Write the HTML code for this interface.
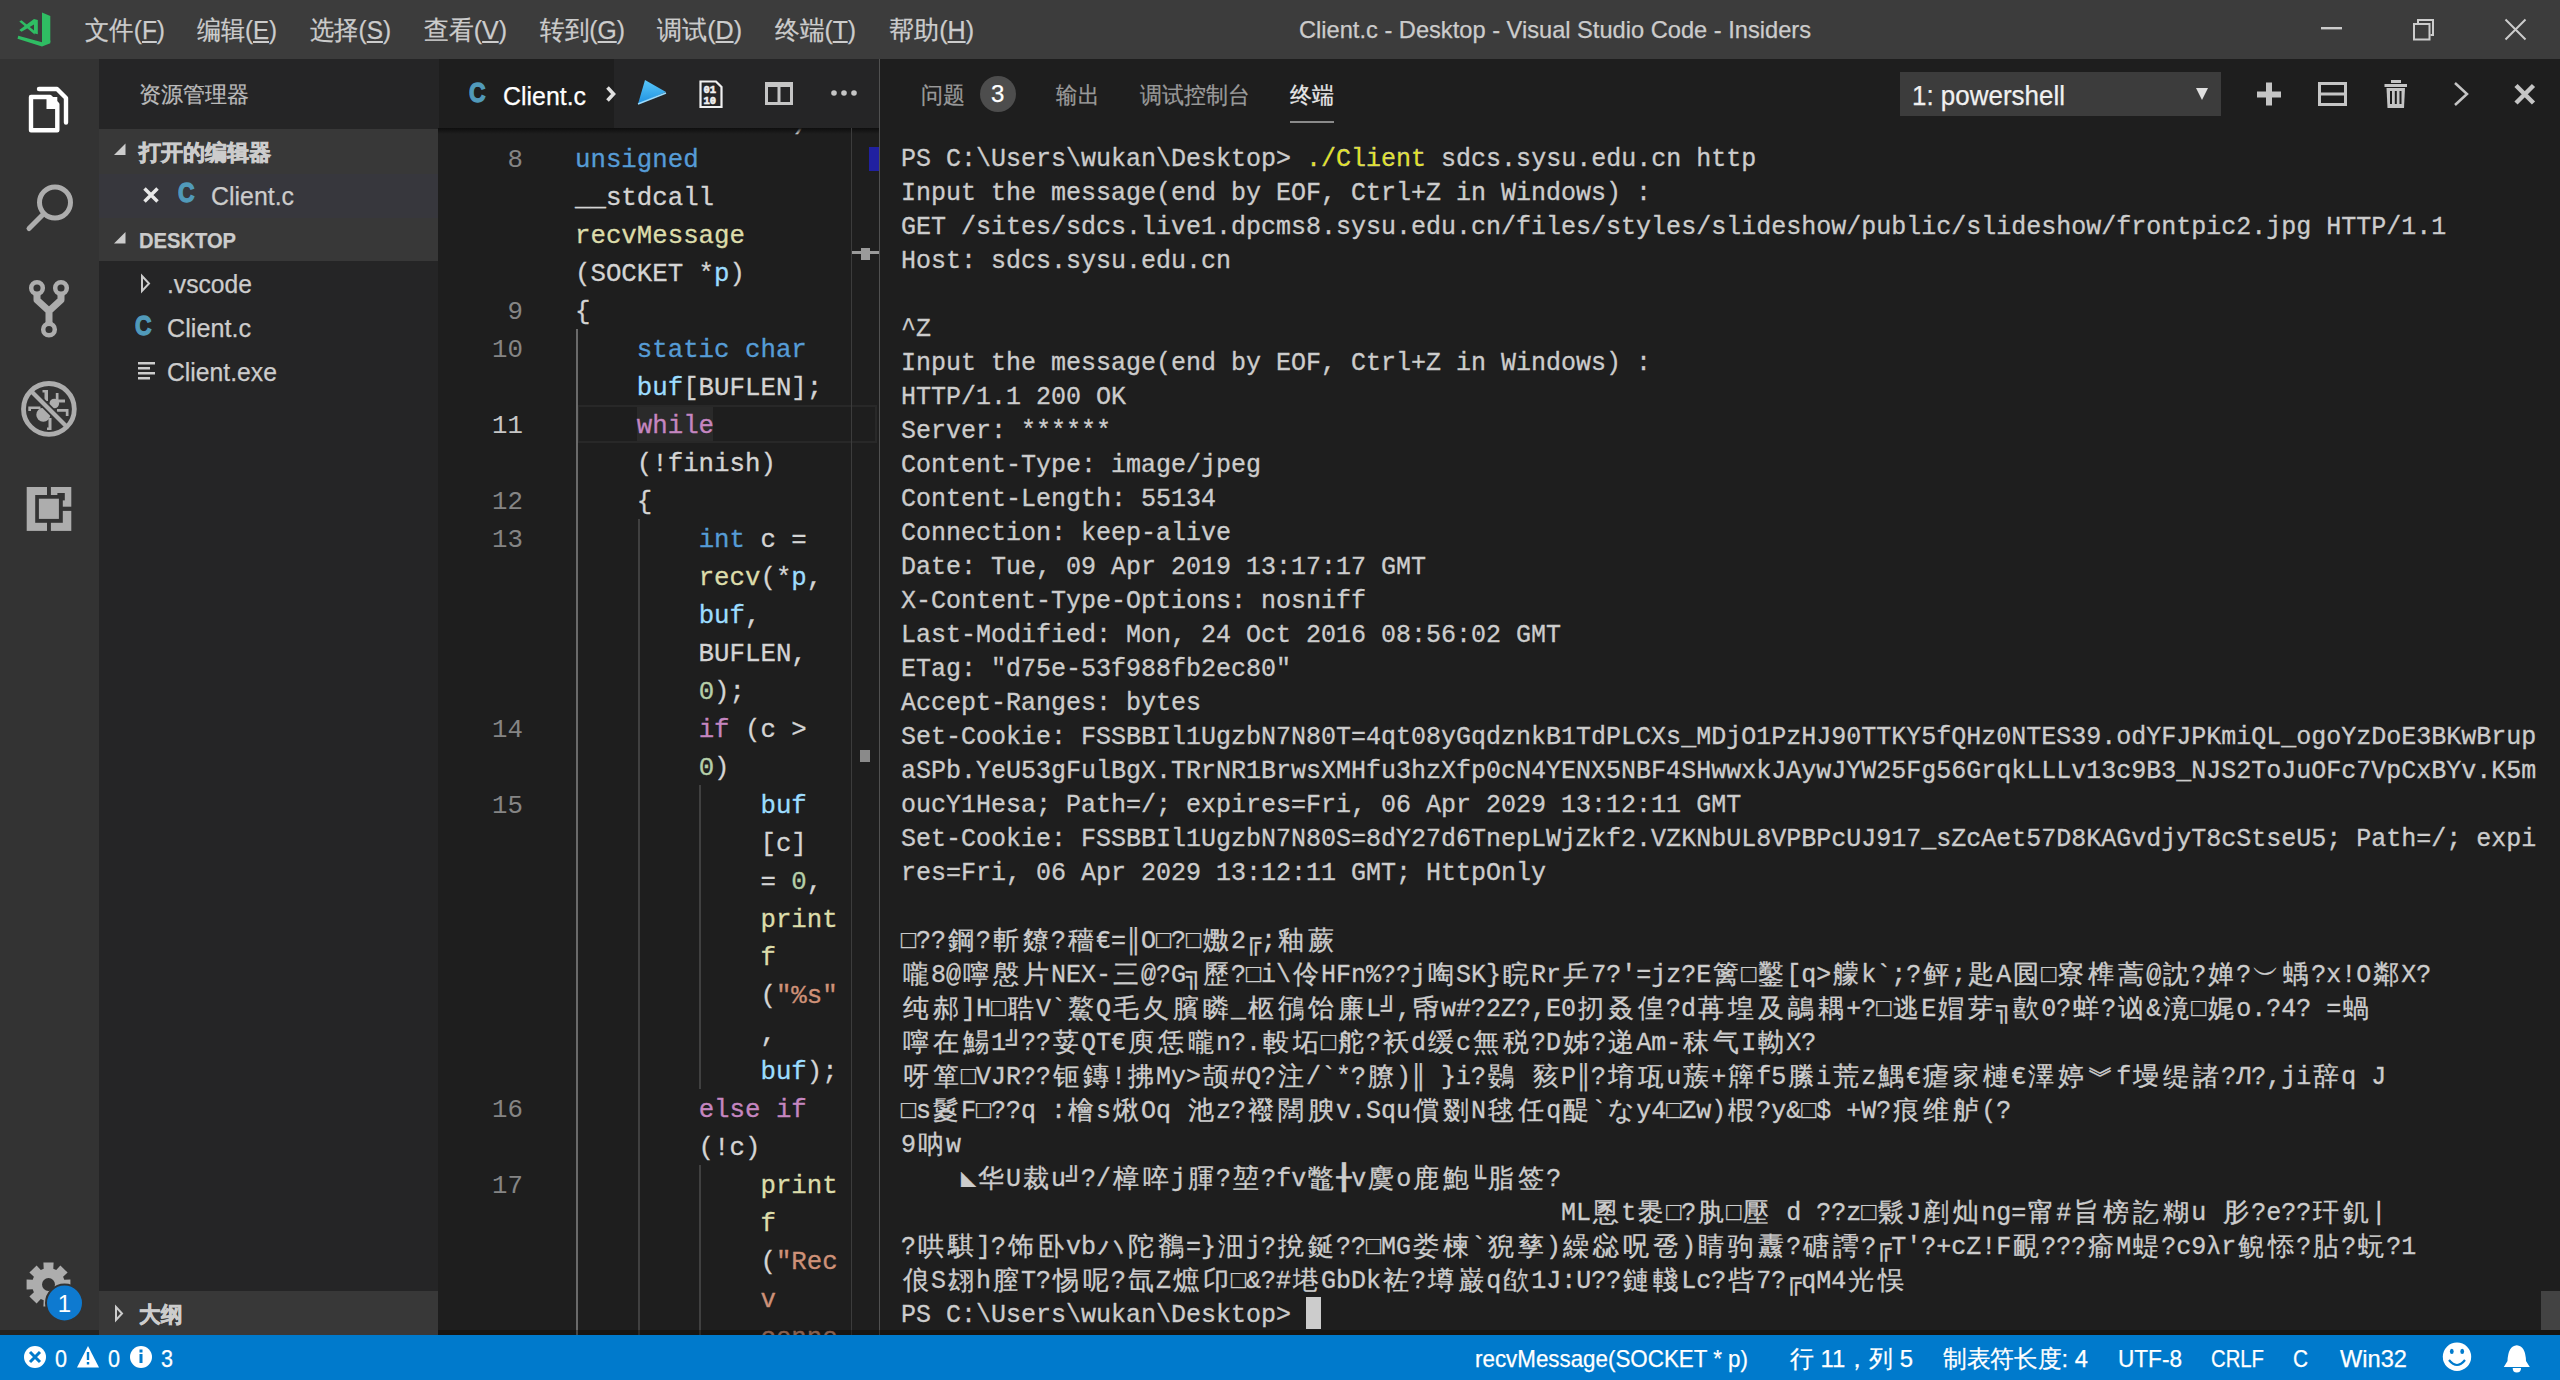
<!DOCTYPE html><html><head><meta charset="utf-8"><style>
*{margin:0;padding:0;box-sizing:border-box}
html,body{width:2560px;height:1380px;overflow:hidden;background:#1e1e1e;font-family:"Liberation Sans",sans-serif}
.a{position:absolute}
.t{white-space:pre;transform-origin:0 0;-webkit-text-stroke:0.25px}
#title{left:0;top:0;width:2560px;height:59px;background:#3c3c3c;color:#cccccc}
#act{left:0;top:59px;width:99px;height:1276px;background:#333333}
#side{left:99px;top:59px;width:339px;height:1276px;background:#252526}
#tabs{left:438px;top:59px;width:442px;height:69px;background:#252526}
#editor{left:438px;top:128px;width:441px;height:1207px;background:#1e1e1e;overflow:hidden}
#panel{left:879px;top:59px;width:1681px;height:1276px;background:#1e1e1e;overflow:hidden}
#status{left:0;top:1335px;width:2560px;height:45px;background:#007acc}
.mono{font-family:"Liberation Mono",monospace}
#term{left:22px;top:84px;font-size:25px;line-height:34px;color:#cccccc;white-space:pre;-webkit-text-stroke:0.3px #cccccc}
#term div{height:34px}
#term i{font-style:normal;display:inline-block;width:30px;text-align:center;font-size:26px;line-height:34px;vertical-align:top}
#code{left:137px;top:-24px;font-size:25.75px;line-height:38px;color:#d4d4d4;white-space:pre;-webkit-text-stroke:0.3px}
#code div{height:38px}
#lnum{left:0;top:-24px;width:85px;text-align:right;font-size:25.75px;line-height:38px;color:#858585;white-space:pre}
#lnum div{height:38px}
.kw{color:#569cd6}.fn{color:#dcdcaa}.vr{color:#9cdcfe}.nm{color:#b5cea8}.st{color:#ce9178}.ct{color:#c586c0}
svg{position:absolute;left:0;top:0}
</style></head><body><div id="title" class="a"></div><div id="act" class="a"></div><div id="side" class="a"></div><div id="tabs" class="a"></div><div class="a" style="left:439px;top:59px;width:175px;height:69px;background:#1e1e1e"></div><div id="editor" class="a"><div class="a" style="left:139px;top:277px;width:300px;height:38px;border:2px solid #282828"></div><div class="a" style="left:199px;top:279px;width:76px;height:34px;background:#2a2a2a"></div><div class="a" style="left:138px;top:201px;width:2px;height:1010px;background:#6a6a6a"></div><div class="a" style="left:200px;top:391px;width:2px;height:820px;background:#404040"></div><div class="a" style="left:261px;top:657px;width:2px;height:304px;background:#404040"></div><div class="a" style="left:261px;top:1037px;width:2px;height:180px;background:#404040"></div><div id="code" class="a mono"><div>              )</div><div><span class="kw">unsigned</span></div><div>__stdcall</div><div><span class="fn">recvMessage</span></div><div>(SOCKET *<span class="vr">p</span>)</div><div>{</div><div>    <span class="kw">static char</span></div><div>    <span class="vr">buf</span>[BUFLEN];</div><div>    <span class="ct">while</span></div><div>    (!finish)</div><div>    {</div><div>        <span class="kw">int</span> c =</div><div>        <span class="fn">recv</span>(*<span class="vr">p</span>,</div><div>        <span class="vr">buf</span>,</div><div>        BUFLEN,</div><div>        <span class="nm">0</span>);</div><div>        <span class="ct">if</span> (c &gt;</div><div>        <span class="nm">0</span>)</div><div>            <span class="vr">buf</span></div><div>            [c]</div><div>            = <span class="nm">0</span>,</div><div>            <span class="fn">print</span></div><div>            <span class="fn">f</span></div><div>            (<span class="st">"%s"</span></div><div>            ,</div><div>            <span class="vr">buf</span>);</div><div>        <span class="ct">else if</span></div><div>        (!c)</div><div>            <span class="fn">print</span></div><div>            <span class="fn">f</span></div><div>            (<span class="st">"Rec</span></div><div>            <span class="st">v</span></div><div>            <span class="st">conne</span></div></div><div id="lnum" class="a mono"><div></div><div>8</div><div></div><div></div><div></div><div>9</div><div>10</div><div></div><div style="color:#c6c6c6">11</div><div></div><div>12</div><div>13</div><div></div><div></div><div></div><div></div><div>14</div><div></div><div>15</div><div></div><div></div><div></div><div></div><div></div><div></div><div></div><div>16</div><div></div><div>17</div><div></div><div></div><div></div><div></div></div><div class="a" style="left:0;top:0;width:441px;height:6px;background:linear-gradient(#0e0e0e,rgba(30,30,30,0))"></div><div class="a" style="left:413px;top:0;width:1px;height:1207px;background:#3c3c3c"></div><div class="a" style="left:431px;top:19px;width:10px;height:24px;background:#2020a0"></div><div class="a" style="left:414px;top:123px;width:27px;height:3px;background:#9a9a9a"></div><div class="a" style="left:423px;top:120px;width:9px;height:12px;background:#9a9a9a"></div><div class="a" style="left:422px;top:622px;width:10px;height:12px;background:#8a8a8a"></div></div><div id="panel" class="a"><div class="a" style="left:0;top:0;width:1px;height:1276px;background:#505050"></div><div id="term" class="a mono"><div>PS C:\Users\wukan\Desktop&gt; <span style="color:#e5e510">./Client</span> sdcs.sysu.edu.cn http</div><div>Input the message(end by EOF, Ctrl+Z in Windows) :</div><div>GET /sites/sdcs.live1.dpcms8.sysu.edu.cn/files/styles/slideshow/public/slideshow/frontpic2.jpg HTTP/1.1</div><div>Host: sdcs.sysu.edu.cn</div><div></div><div>^Z</div><div>Input the message(end by EOF, Ctrl+Z in Windows) :</div><div>HTTP/1.1 200 OK</div><div>Server: ******</div><div>Content-Type: image/jpeg</div><div>Content-Length: 55134</div><div>Connection: keep-alive</div><div>Date: Tue, 09 Apr 2019 13:17:17 GMT</div><div>X-Content-Type-Options: nosniff</div><div>Last-Modified: Mon, 24 Oct 2016 08:56:02 GMT</div><div>ETag: "d75e-53f988fb2ec80"</div><div>Accept-Ranges: bytes</div><div>Set-Cookie: FSSBBIl1UgzbN7N80T=4qt08yGqdznkB1TdPLCXs_MDjO1PzHJ90TTKY5fQHz0NTES39.odYFJPKmiQL_ogoYzDoE3BKwBrup</div><div>aSPb.YeU53gFulBgX.TRrNR1BrwsXMHfu3hzXfp0cN4YENX5NBF4SHwwxkJAywJYW25Fg56GrqkLLLv13c9B3_NJS2ToJuOFc7VpCxBYv.K5m</div><div>oucY1Hesa; Path=/; expires=Fri, 06 Apr 2029 13:12:11 GMT</div><div>Set-Cookie: FSSBBIl1UgzbN7N80S=8dY27d6TnepLWjZkf2.VZKNbUL8VPBPcUJ917_sZcAet57D8KAGvdjyT8cStseU5; Path=/; expi</div><div>res=Fri, 06 Apr 2029 13:12:11 GMT; HttpOnly</div><div></div><div>□??<i>鋼</i>?<i>斬</i><i>爒</i>?<i>穡</i>€=║O□?□<i>嫐</i>2╔;<i>釉</i><i>蕨</i></div><div><i>嚨</i>8@<i>嚀</i><i>慇</i><i>片</i>NEX-<i>三</i>@?G╗<i>歷</i>?□i\<i>伶</i>HFn%??j<i>啕</i>SK}<i>睆</i>Rr<i>乒</i>7?'=jz?E<i>篱</i>□<i>鑿</i>[q&gt;<i>艨</i>k`;?<i>鲆</i>;<i>匙</i>A<i>囻</i>□<i>寮</i><i>榫</i><i>蒿</i>@<i>訦</i>?<i>婵</i>?<i>︶</i><i>蝺</i>?x!O<i>鄰</i>X?</div><div><i>纯</i><i>郝</i>]H□<i>聕</i>V`<i>鰲</i>Q<i>毛</i><i>夂</i><i>臏</i><i>瞵</i>_<i>柩</i><i>鴴</i><i>饴</i><i>廉</i>L╝,<i>帋</i>w#?2Z?,E0<i>扨</i><i>叒</i><i>偟</i>?d<i>苒</i><i>堭</i><i>及</i><i>鶮</i><i>耦</i>+?□<i>逃</i>E<i>媢</i><i>芽</i>╗<i>歖</i>0?<i>蛘</i>?<i>讻</i>&amp;<i>滰</i>□<i>娓</i>o.?4? =<i>蝸</i></div><div><i>嚀</i><i>在</i><i>鰑</i>1╝??<i>荽</i>QT€<i>庾</i><i>恁</i><i>曨</i>n?.<i>軗</i><i>坧</i>□<i>舵</i>?<i>袄</i>d<i>缓</i>c<i>無</i><i>税</i>?D<i>姊</i>?<i>递</i>Am-<i>秣</i><i>气</i>I<i>軪</i>X?</div><div><i>呀</i><i>箪</i>□VJR??<i>钷</i><i>鏄</i>!<i>拂</i>My&gt;<i>颉</i>#Q?<i>注</i>/`*?<i>膫</i>)║ }i?<i>鷃</i> <i>豥</i>P║?<i>堉</i><i>瓨</i>u<i>蔟</i>+<i>簰</i>f5<i>縢</i>i<i>荒</i>z<i>鰅</i>€<i>瘧</i><i>家</i><i>槤</i>€<i>澤</i><i>婷</i><i>︾</i>f<i>墁</i><i>缇</i><i>諸</i>?Л?,ji<i>辞</i>q J</div><div>□s<i>鬉</i>F□??q :<i>檜</i>s<i>煍</i>Oq <i>池</i>z?<i>襏</i><i>闊</i><i>腴</i>v.Squ<i>償</i><i>剟</i>N<i>毬</i><i>任</i>q<i>醍</i>`<i>な</i>y4□Zw)<i>椵</i>?y&amp;□$ +W?<i>痕</i><i>维</i><i>舻</i>(?</div><div>9<i>呐</i>w</div><div>    ◣<i>华</i>U<i>裁</i>u╝?/<i>樟</i><i>啐</i>j<i>腪</i>?<i>堃</i>?fv<i>鼈</i>╂v<i>麌</i>o<i>鹿</i><i>鮑</i>╙<i>脂</i><i>签</i>?</div><div>                                            ML<i>慁</i>t<i>褁</i>□?<i>肒</i>□<i>壓</i> d ??z□<i>鬏</i>J<i>剷</i><i>灿</i>ng=<i>甯</i>#<i>旨</i><i>榜</i><i>訖</i><i>糊</i>u <i>肜</i>?e??<i>玕</i><i>釠</i>|</div><div>?<i>哄</i><i>騏</i>]?<i>饰</i><i>卧</i>vb<i>ハ</i><i>陀</i><i>鶺</i>=}<i>沺</i>j?<i>挩</i><i>鋋</i>??□MG<i>娄</i><i>楝</i>`<i>猊</i><i>孳</i>)<i>繰</i><i>惢</i><i>呪</i><i>卺</i>)<i>睛</i><i>驹</i><i>纛</i>?<i>磄</i><i>謣</i>?╔T'?+cZ!F<i>靦</i>???<i>瘉</i>M<i>蝭</i>?c9λr<i>鲵</i><i>悿</i>?<i>胋</i>?<i>蚖</i>?1</div><div><i>俍</i>S<i>翃</i>h<i>膣</i>T?<i>惕</i><i>呢</i>?<i>氙</i>Z<i>熫</i><i>卬</i>□&amp;?#<i>塂</i>GbDk<i>袏</i>?<i>墫</i><i>巌</i>q<i>欿</i>1J:U??<i>鏈</i><i>輚</i>Lc?<i>呰</i>7?╔qM4<i>光</i><i>悮</i></div><div>PS C:\Users\wukan\Desktop&gt; </div></div><div class="a" style="left:427px;top:1238px;width:15px;height:32px;background:#cccccc"></div><div class="a" style="left:1662px;top:1232px;width:19px;height:39px;background:#434343"></div></div><div class="a" style="left:0;top:1330px;width:2560px;height:5px;background:rgba(10,5,0,0.35)"></div><div id="status" class="a"></div><div id="f1" class="a t" style="left:85px;top:14px;font-size:26px;line-height:32px;color:#cccccc;transform:scaleX(0.9386);">文件(<u>F</u>)</div><div id="f2" class="a t" style="left:197px;top:14px;font-size:26px;line-height:32px;color:#cccccc;transform:scaleX(0.9229);">编辑(<u>E</u>)</div><div id="f3" class="a t" style="left:310px;top:14px;font-size:26px;line-height:32px;color:#cccccc;transform:scaleX(0.9344);">选择(<u>S</u>)</div><div id="f4" class="a t" style="left:424px;top:14px;font-size:26px;line-height:32px;color:#cccccc;transform:scaleX(0.9575);">查看(<u>V</u>)</div><div id="f5" class="a t" style="left:540px;top:14px;font-size:26px;line-height:32px;color:#cccccc;transform:scaleX(0.9489);">转到(<u>G</u>)</div><div id="f6" class="a t" style="left:657px;top:14px;font-size:26px;line-height:32px;color:#cccccc;transform:scaleX(0.9645);">调试(<u>D</u>)</div><div id="f7" class="a t" style="left:775px;top:14px;font-size:26px;line-height:32px;color:#cccccc;transform:scaleX(0.9503);">终端(<u>T</u>)</div><div id="f8" class="a t" style="left:889px;top:14px;font-size:26px;line-height:32px;color:#cccccc;transform:scaleX(0.9645);">帮助(<u>H</u>)</div><div id="f9" class="a t" style="left:1299px;top:14px;font-size:24px;line-height:32px;color:#cccccc;transform:scaleX(0.9850);">Client.c - Desktop - Visual Studio Code - Insiders</div><div id="f10" class="a t" style="left:139px;top:80px;font-size:22px;line-height:30px;color:#bbbbbb;">资源管理器</div><div class="a" style="left:99px;top:129px;width:339px;height:132px;background:#383838"></div><div class="a" style="left:99px;top:174px;width:339px;height:44px;background:#37373d"></div><div class="a" style="left:99px;top:1291px;width:339px;height:44px;background:#383838"></div><div id="f11" class="a t" style="left:139px;top:138px;font-size:22px;line-height:30px;color:#cccccc;font-weight:bold;-webkit-text-stroke:0.7px #cccccc;">打开的编辑器</div><div id="f12" class="a t" style="left:139px;top:226px;font-size:22px;line-height:30px;color:#cccccc;font-weight:bold;transform:scaleX(0.9155);">DESKTOP</div><div id="f13" class="a t" style="left:139px;top:1300px;font-size:22px;line-height:30px;color:#cccccc;font-weight:bold;transform:scaleX(0.9773);-webkit-text-stroke:0.7px #cccccc;">大纲</div><div id="f14" class="a t" style="left:211px;top:180px;font-size:26px;line-height:32px;color:#cccccc;transform:scaleX(0.9573);">Client.c</div><div id="f15" class="a t" style="left:167px;top:268px;font-size:26px;line-height:32px;color:#cccccc;transform:scaleX(0.9486);">.vscode</div><div id="f16" class="a t" style="left:167px;top:312px;font-size:26px;line-height:32px;color:#cccccc;transform:scaleX(0.9688);">Client.c</div><div id="f17" class="a t" style="left:167px;top:356px;font-size:26px;line-height:32px;color:#cccccc;transform:scaleX(0.9514);">Client.exe</div><div id="f18" class="a t" style="left:134.5px;top:313px;font-size:27px;line-height:27px;color:#519aba;font-weight:bold;transform:scaleX(0.8462);-webkit-text-stroke:1.3px #519aba;">C</div><div id="f19" class="a t" style="left:177.6px;top:180.4px;font-size:27px;line-height:27px;color:#519aba;font-weight:bold;transform:scaleX(0.8462);-webkit-text-stroke:1.3px #519aba;">C</div><div id="f20" class="a t" style="left:469.1px;top:80.4px;font-size:27px;line-height:27px;color:#519aba;font-weight:bold;transform:scaleX(0.8462);-webkit-text-stroke:1.3px #519aba;">C</div><div id="f21" class="a t" style="left:503px;top:80px;font-size:26px;line-height:32px;color:#ffffff;transform:scaleX(0.9573);">Client.c</div><div id="f22" class="a t" style="left:921px;top:80px;font-size:23px;line-height:30px;color:#9a9a9a;transform:scaleX(0.9565);">问题</div><div id="f23" class="a t" style="left:1056px;top:80px;font-size:23px;line-height:30px;color:#9a9a9a;transform:scaleX(0.9348);">输出</div><div id="f24" class="a t" style="left:1140px;top:80px;font-size:23px;line-height:30px;color:#9a9a9a;transform:scaleX(0.9565);">调试控制台</div><div id="f25" class="a t" style="left:1290px;top:80px;font-size:23px;line-height:30px;color:#e7e7e7;transform:scaleX(0.9565);">终端</div><div class="a" style="left:1290px;top:121px;width:44px;height:2px;background:#8a8a8a"></div><div class="a" style="left:980px;top:76px;width:36px;height:36px;border-radius:18px;background:#4d4d4d"></div><div id="f26" class="a t" style="left:991px;top:81px;font-size:24px;line-height:26px;color:#ffffff;">3</div><div class="a" style="left:1900px;top:72px;width:321px;height:44px;background:#3c3c3c"></div><div id="f27" class="a t" style="left:1912px;top:80px;font-size:27px;line-height:32px;color:#f0f0f0;transform:scaleX(0.9617);">1: powershell</div><div id="f28" class="a t" style="left:55px;top:1344px;font-size:24px;line-height:30px;color:#ffffff;transform:scaleX(0.8982);">0</div><div id="f29" class="a t" style="left:108px;top:1344px;font-size:24px;line-height:30px;color:#ffffff;transform:scaleX(0.8982);">0</div><div id="f30" class="a t" style="left:161px;top:1344px;font-size:24px;line-height:30px;color:#ffffff;transform:scaleX(0.8982);">3</div><div id="f31" class="a t" style="left:1475px;top:1344px;font-size:24px;line-height:30px;color:#ffffff;transform:scaleX(0.9318);">recvMessage(SOCKET * p)</div><div id="f32" class="a t" style="left:1790px;top:1344px;font-size:24px;line-height:30px;color:#ffffff;transform:scaleX(0.9951);">行 11，列 5</div><div id="f33" class="a t" style="left:1943px;top:1344px;font-size:24px;line-height:30px;color:#ffffff;transform:scaleX(0.9885);">制表符长度: 4</div><div id="f34" class="a t" style="left:2118px;top:1344px;font-size:24px;line-height:30px;color:#ffffff;transform:scaleX(0.9412);">UTF-8</div><div id="f35" class="a t" style="left:2211px;top:1344px;font-size:24px;line-height:30px;color:#ffffff;transform:scaleX(0.8457);">CRLF</div><div id="f36" class="a t" style="left:2293px;top:1344px;font-size:24px;line-height:30px;color:#ffffff;transform:scaleX(0.8649);">C</div><div id="f37" class="a t" style="left:2340px;top:1344px;font-size:24px;line-height:30px;color:#ffffff;transform:scaleX(0.9848);">Win32</div><svg width="2560" height="1380" viewBox="0 0 2560 1380"><g fill="#2fbd63"><polygon points="42,12.6 50.3,15.9 50.3,42 42,45"/><polygon points="18.3,35.8 42,42.2 50.3,40.5 50.3,43.2 42,46.5 17.5,38.8"/><polygon points="19.3,21.5 21.5,20.2 34.6,31 34.6,34.5"/><polygon points="19.3,30 34,19 37.8,20 37.8,34.3 34,33.2 34,24.5 21.5,31.8"/></g><rect x="2321" y="27" width="21" height="2.4" fill="#cccccc"/><g fill="none" stroke="#cccccc" stroke-width="2"><rect x="2414" y="24" width="15.5" height="15.5"/><path d="M2418,23 V20 H2433 V35 H2430.5"/><path d="M2505.5,19.5 L2525.5,39.5 M2525.5,19.5 L2505.5,39.5"/></g><path d="M39,89 H57 L66,98 V122.5" fill="none" stroke="#ffffff" stroke-width="4.4" stroke-linecap="round" stroke-linejoin="round"/><path d="M27,92 H51 L62,103 V135 H27 Z" fill="#333333"/><path d="M31,97 H50 L57.3,104.3 V130.3 H31 Z" fill="none" stroke="#ffffff" stroke-width="4.4" stroke-linejoin="round"/><rect x="46.5" y="97" width="10.8" height="12" fill="#ffffff"/><g fill="none" stroke="#adadad" stroke-width="5" stroke-linecap="round"><circle cx="55" cy="202.5" r="15.5"/><path d="M43.5,214 L29,228.5"/></g><g fill="none" stroke="#adadad" stroke-width="4.5"><circle cx="37" cy="288" r="5.8"/><circle cx="61" cy="288" r="5.8"/><circle cx="49" cy="329.5" r="5.8"/><path d="M37,294 V300 L49,311 L61,300 V294 M49,311 V323.5" stroke-width="7" stroke-linejoin="round"/></g><g fill="#adadad"><circle cx="43.3" cy="414.8" r="7"/><circle cx="54.3" cy="403.5" r="4.8"/><path d="M28.3,406.5 H40.5 V409 H31 V411 H28.3 Z"/><path d="M44.5,390 H48 V401 H44.5 Z M42.5,390 H46 V392.5 H42.5Z"/><path d="M55.8,393 H58.5 V399.5 H65 V402.5 H55.8 Z"/><path d="M57,409 H68.5 V416 H65.8 V411.8 H57 Z"/><path d="M48.5,418 H51.5 V430 H47 V427.5 H48.5 Z"/></g><path d="M31.5,391.5 L66.5,426.5" stroke="#333333" stroke-width="8"/><g fill="none" stroke="#adadad" stroke-width="4.8"><circle cx="48.9" cy="408.9" r="25.4"/><path d="M31,391 L66.5,426.5" stroke-width="4.3"/></g><rect x="26.7" y="487" width="44.6" height="43.9" fill="#adadad"/><g fill="#333333"><rect x="35.2" y="495" width="27.6" height="27.8"/><rect x="47" y="486" width="3.9" height="46"/><rect x="59.6" y="506.7" width="12.7" height="4.2"/><rect x="57.4" y="493" width="7.4" height="7.4"/></g><rect x="38.9" y="498.7" width="20" height="20.2" fill="#adadad"/><polygon fill="#adadad" points="70.4,1279.4 70.4,1289.6 64.3,1289.3 63.1,1292.2 67.6,1296.4 60.4,1303.6 56.2,1299.1 53.3,1300.3 53.6,1306.4 43.4,1306.4 43.7,1300.3 40.8,1299.1 36.6,1303.6 29.4,1296.4 33.9,1292.2 32.7,1289.3 26.6,1289.6 26.6,1279.4 32.7,1279.7 33.9,1276.8 29.4,1272.6 36.6,1265.4 40.8,1269.9 43.7,1268.7 43.4,1262.6 53.6,1262.6 53.3,1268.7 56.2,1269.9 60.4,1265.4 67.6,1272.6 63.1,1276.8 64.3,1279.7"/><circle cx="48.5" cy="1284.5" r="6.5" fill="#333333"/><circle cx="64.5" cy="1303" r="18.5" fill="#0e7ad0" stroke="#333333" stroke-width="2"/><text x="64.5" y="1312" text-anchor="middle" font-family="Liberation Sans" font-size="24" fill="#ffffff">1</text><g fill="#cccccc"><polygon points="125.5,143.5 125.5,155 114,155"/><polygon points="125.5,232 125.5,243.5 114,243.5"/></g><g fill="none" stroke="#cccccc" stroke-width="2"><polygon points="142,276 149,283.5 142,291"/><polygon points="116,1307 122,1313.5 116,1320"/></g><path d="M144.5,188.5 L157.5,201.5 M157.5,188.5 L144.5,201.5" stroke="#e8e8e8" stroke-width="3.5"/><g fill="#cccccc"><rect x="138" y="362" width="17" height="2.5"/><rect x="138" y="367" width="12" height="2.5"/><rect x="138" y="372" width="17" height="2.5"/><rect x="138" y="377" width="12" height="2.5"/></g><path d="M607.5,87.5 L613.5,94 L607.5,100.5" fill="none" stroke="#e0e0e0" stroke-width="3.6"/><defs><linearGradient id="gb" x1="0" y1="0" x2="0" y2="1"><stop offset="0" stop-color="#5ac8fa"/><stop offset="1" stop-color="#1e90e0"/></linearGradient></defs><polygon points="645,80 666,92 638,104" fill="url(#gb)"/><path d="M638,104 L666,93" stroke="#9adcff" stroke-width="1.5"/><path d="M700.5,81.5 H716 L721.5,87 V107 H700.5 Z" fill="none" stroke="#f0f0f0" stroke-width="2.2"/><text x="703.5" y="93" font-family="Liberation Mono" font-weight="bold" font-size="10.5" fill="#f0f0f0" stroke="#f0f0f0" stroke-width="0.6">01</text><text x="703.5" y="104" font-family="Liberation Mono" font-weight="bold" font-size="10.5" fill="#f0f0f0" stroke="#f0f0f0" stroke-width="0.6">10</text><g fill="none" stroke="#c5c5c5" stroke-width="3"><rect x="766.5" y="83.5" width="25" height="20"/><path d="M779,83.5 V103.5"/></g><rect x="765" y="82" width="28" height="5" fill="#c5c5c5"/><g fill="#c5c5c5"><circle cx="834" cy="93" r="2.8"/><circle cx="844" cy="93" r="2.8"/><circle cx="854" cy="93" r="2.8"/></g><polygon points="2196,88 2208,88 2202,100" fill="#e0e0e0"/><g fill="#c5c5c5"><rect x="2266" y="82.5" width="6" height="23"/><rect x="2257" y="91.5" width="24" height="6"/></g><g fill="none" stroke="#c5c5c5" stroke-width="3"><rect x="2319.5" y="83.5" width="26" height="21"/><path d="M2319.5,94 H2345.5"/></g><g fill="#c5c5c5"><rect x="2384.5" y="84" width="22.5" height="3"/><rect x="2391" y="80" width="10" height="3"/><path d="M2386.5,88 H2405 L2404,108 H2387.5 Z"/></g><g fill="#1e1e1e"><rect x="2390" y="91" width="2" height="13"/><rect x="2394.8" y="91" width="2" height="13"/><rect x="2399.5" y="91" width="2" height="13"/></g><path d="M2455,83 L2467,94 L2455,105" fill="none" stroke="#c5c5c5" stroke-width="2.5"/><path d="M2516,85.5 L2533.5,103 M2533.5,85.5 L2516,103" stroke="#c5c5c5" stroke-width="4.5"/><g><circle cx="35" cy="1357" r="11" fill="#ffffff"/><path d="M30,1352 L40,1362 M40,1352 L30,1362" stroke="#007acc" stroke-width="3"/></g><g><polygon points="88,1346 99,1367.5 77,1367.5" fill="#ffffff"/><rect x="86.8" y="1352" width="2.4" height="8" fill="#007acc"/><rect x="86.8" y="1362" width="2.4" height="2.5" fill="#007acc"/></g><g><circle cx="141" cy="1357" r="11" fill="#ffffff"/><rect x="139.5" y="1354" width="3" height="9" fill="#007acc"/><rect x="139.5" y="1349.5" width="3" height="3" fill="#007acc"/></g><g><circle cx="2457" cy="1356.8" r="14.2" fill="#ffffff"/><ellipse cx="2451.8" cy="1351.4" rx="1.9" ry="2.6" fill="#007acc"/><ellipse cx="2462.2" cy="1351.4" rx="1.9" ry="2.6" fill="#007acc"/><path d="M2449,1360 Q2457,1370 2465,1360" fill="none" stroke="#007acc" stroke-width="2.2"/></g><g fill="#ffffff"><path d="M2503.8,1367 L2507.5,1361 Q2508,1346 2516.8,1345.2 Q2525.6,1346 2526,1361 L2529.8,1367 Z"/><path d="M2512.7,1368 H2521 Q2521,1372.5 2516.8,1372.5 Q2512.7,1372.5 2512.7,1368 Z"/></g></svg></body></html>
